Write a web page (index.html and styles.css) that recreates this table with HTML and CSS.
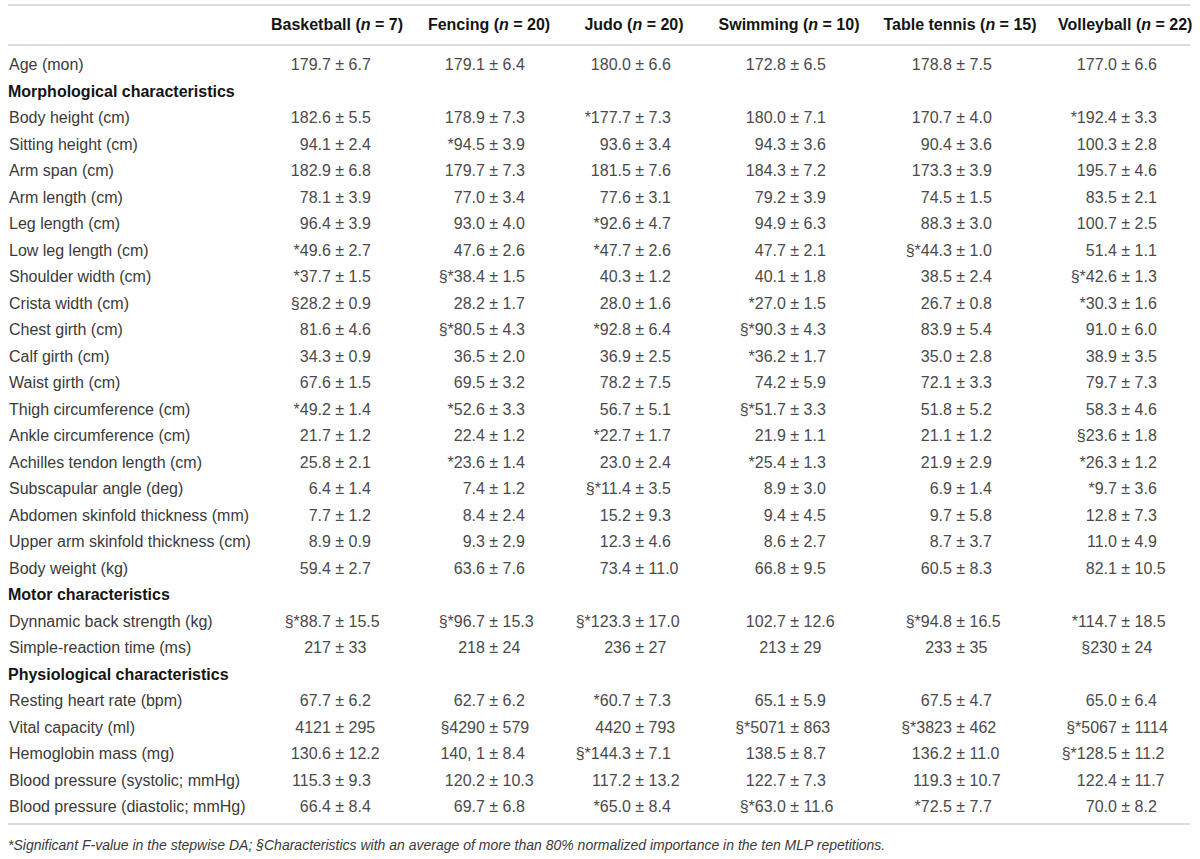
FILE: index.html
```html
<!DOCTYPE html>
<html lang="en">
<head>
<meta charset="utf-8">
<title>Table</title>
<link rel="stylesheet" href="styles.css">
</head>
<body>
<div class="wrap">
<table class="data">
<colgroup>
<col class="c-label"><col class="c-1"><col class="c-2"><col class="c-3"><col class="c-4"><col class="c-5"><col class="c-6">
</colgroup>
<thead>
<tr>
<th class="h-label"></th>
<th>Basketball (<i>n</i> = 7)</th>
<th>Fencing (<i>n</i> = 20)</th>
<th>Judo (<i>n</i> = 20)</th>
<th>Swimming (<i>n</i> = 10)</th>
<th class="h-5">Table tennis (<i>n</i> = 15)</th>
<th class="h-6">Volleyball (<i>n</i> = 22)</th>
</tr>
</thead>
<tbody>
<tr class="r first"><td>Age (mon)</td><td><span class="m">179.7</span> ± 6.7</td><td><span class="m">179.1</span> ± 6.4</td><td><span class="m">180.0</span> ± 6.6</td><td><span class="m">172.8</span> ± 6.5</td><td><span class="m">178.8</span> ± 7.5</td><td><span class="m">177.0</span> ± 6.6</td></tr>
<tr class="sec"><td colspan="7">Morphological characteristics</td></tr>
<tr class="r"><td>Body height (cm)</td><td><span class="m">182.6</span> ± 5.5</td><td><span class="m">178.9</span> ± 7.3</td><td><span class="m">*177.7</span> ± 7.3</td><td><span class="m">180.0</span> ± 7.1</td><td><span class="m">170.7</span> ± 4.0</td><td><span class="m">*192.4</span> ± 3.3</td></tr>
<tr class="r"><td>Sitting height (cm)</td><td><span class="m">94.1</span> ± 2.4</td><td><span class="m">*94.5</span> ± 3.9</td><td><span class="m">93.6</span> ± 3.4</td><td><span class="m">94.3</span> ± 3.6</td><td><span class="m">90.4</span> ± 3.6</td><td><span class="m">100.3</span> ± 2.8</td></tr>
<tr class="r"><td>Arm span (cm)</td><td><span class="m">182.9</span> ± 6.8</td><td><span class="m">179.7</span> ± 7.3</td><td><span class="m">181.5</span> ± 7.6</td><td><span class="m">184.3</span> ± 7.2</td><td><span class="m">173.3</span> ± 3.9</td><td><span class="m">195.7</span> ± 4.6</td></tr>
<tr class="r"><td>Arm length (cm)</td><td><span class="m">78.1</span> ± 3.9</td><td><span class="m">77.0</span> ± 3.4</td><td><span class="m">77.6</span> ± 3.1</td><td><span class="m">79.2</span> ± 3.9</td><td><span class="m">74.5</span> ± 1.5</td><td><span class="m">83.5</span> ± 2.1</td></tr>
<tr class="r"><td>Leg length (cm)</td><td><span class="m">96.4</span> ± 3.9</td><td><span class="m">93.0</span> ± 4.0</td><td><span class="m">*92.6</span> ± 4.7</td><td><span class="m">94.9</span> ± 6.3</td><td><span class="m">88.3</span> ± 3.0</td><td><span class="m">100.7</span> ± 2.5</td></tr>
<tr class="r"><td>Low leg length (cm)</td><td><span class="m">*49.6</span> ± 2.7</td><td><span class="m">47.6</span> ± 2.6</td><td><span class="m">*47.7</span> ± 2.6</td><td><span class="m">47.7</span> ± 2.1</td><td><span class="m">§*44.3</span> ± 1.0</td><td><span class="m">51.4</span> ± 1.1</td></tr>
<tr class="r"><td>Shoulder width (cm)</td><td><span class="m">*37.7</span> ± 1.5</td><td><span class="m">§*38.4</span> ± 1.5</td><td><span class="m">40.3</span> ± 1.2</td><td><span class="m">40.1</span> ± 1.8</td><td><span class="m">38.5</span> ± 2.4</td><td><span class="m">§*42.6</span> ± 1.3</td></tr>
<tr class="r"><td>Crista width (cm)</td><td><span class="m">§28.2</span> ± 0.9</td><td><span class="m">28.2</span> ± 1.7</td><td><span class="m">28.0</span> ± 1.6</td><td><span class="m">*27.0</span> ± 1.5</td><td><span class="m">26.7</span> ± 0.8</td><td><span class="m">*30.3</span> ± 1.6</td></tr>
<tr class="r"><td>Chest girth (cm)</td><td><span class="m">81.6</span> ± 4.6</td><td><span class="m">§*80.5</span> ± 4.3</td><td><span class="m">*92.8</span> ± 6.4</td><td><span class="m">§*90.3</span> ± 4.3</td><td><span class="m">83.9</span> ± 5.4</td><td><span class="m">91.0</span> ± 6.0</td></tr>
<tr class="r"><td>Calf girth (cm)</td><td><span class="m">34.3</span> ± 0.9</td><td><span class="m">36.5</span> ± 2.0</td><td><span class="m">36.9</span> ± 2.5</td><td><span class="m">*36.2</span> ± 1.7</td><td><span class="m">35.0</span> ± 2.8</td><td><span class="m">38.9</span> ± 3.5</td></tr>
<tr class="r"><td>Waist girth (cm)</td><td><span class="m">67.6</span> ± 1.5</td><td><span class="m">69.5</span> ± 3.2</td><td><span class="m">78.2</span> ± 7.5</td><td><span class="m">74.2</span> ± 5.9</td><td><span class="m">72.1</span> ± 3.3</td><td><span class="m">79.7</span> ± 7.3</td></tr>
<tr class="r"><td>Thigh circumference (cm)</td><td><span class="m">*49.2</span> ± 1.4</td><td><span class="m">*52.6</span> ± 3.3</td><td><span class="m">56.7</span> ± 5.1</td><td><span class="m">§*51.7</span> ± 3.3</td><td><span class="m">51.8</span> ± 5.2</td><td><span class="m">58.3</span> ± 4.6</td></tr>
<tr class="r"><td>Ankle circumference (cm)</td><td><span class="m">21.7</span> ± 1.2</td><td><span class="m">22.4</span> ± 1.2</td><td><span class="m">*22.7</span> ± 1.7</td><td><span class="m">21.9</span> ± 1.1</td><td><span class="m">21.1</span> ± 1.2</td><td><span class="m">§23.6</span> ± 1.8</td></tr>
<tr class="r"><td>Achilles tendon length (cm)</td><td><span class="m">25.8</span> ± 2.1</td><td><span class="m">*23.6</span> ± 1.4</td><td><span class="m">23.0</span> ± 2.4</td><td><span class="m">*25.4</span> ± 1.3</td><td><span class="m">21.9</span> ± 2.9</td><td><span class="m">*26.3</span> ± 1.2</td></tr>
<tr class="r"><td>Subscapular angle (deg)</td><td><span class="m">6.4</span> ± 1.4</td><td><span class="m">7.4</span> ± 1.2</td><td><span class="m">§*11.4</span> ± 3.5</td><td><span class="m">8.9</span> ± 3.0</td><td><span class="m">6.9</span> ± 1.4</td><td><span class="m">*9.7</span> ± 3.6</td></tr>
<tr class="r"><td>Abdomen skinfold thickness (mm)</td><td><span class="m">7.7</span> ± 1.2</td><td><span class="m">8.4</span> ± 2.4</td><td><span class="m">15.2</span> ± 9.3</td><td><span class="m">9.4</span> ± 4.5</td><td><span class="m">9.7</span> ± 5.8</td><td><span class="m">12.8</span> ± 7.3</td></tr>
<tr class="r"><td>Upper arm skinfold thickness (cm)</td><td><span class="m">8.9</span> ± 0.9</td><td><span class="m">9.3</span> ± 2.9</td><td><span class="m">12.3</span> ± 4.6</td><td><span class="m">8.6</span> ± 2.7</td><td><span class="m">8.7</span> ± 3.7</td><td><span class="m">11.0</span> ± 4.9</td></tr>
<tr class="r"><td>Body weight (kg)</td><td><span class="m">59.4</span> ± 2.7</td><td><span class="m">63.6</span> ± 7.6</td><td><span class="m">73.4</span> ± 11.0</td><td><span class="m">66.8</span> ± 9.5</td><td><span class="m">60.5</span> ± 8.3</td><td><span class="m">82.1</span> ± 10.5</td></tr>
<tr class="sec"><td colspan="7">Motor characteristics</td></tr>
<tr class="r"><td>Dynnamic back strength (kg)</td><td><span class="m">§*88.7</span> ± 15.5</td><td><span class="m">§*96.7</span> ± 15.3</td><td><span class="m">§*123.3</span> ± 17.0</td><td><span class="m">102.7</span> ± 12.6</td><td><span class="m">§*94.8</span> ± 16.5</td><td><span class="m">*114.7</span> ± 18.5</td></tr>
<tr class="r"><td>Simple-reaction time (ms)</td><td><span class="m">217</span> ± 33</td><td><span class="m">218</span> ± 24</td><td><span class="m">236</span> ± 27</td><td><span class="m">213</span> ± 29</td><td><span class="m">233</span> ± 35</td><td><span class="m">§230</span> ± 24</td></tr>
<tr class="sec"><td colspan="7">Physiological characteristics</td></tr>
<tr class="r"><td>Resting heart rate (bpm)</td><td><span class="m">67.7</span> ± 6.2</td><td><span class="m">62.7</span> ± 6.2</td><td><span class="m">*60.7</span> ± 7.3</td><td><span class="m">65.1</span> ± 5.9</td><td><span class="m">67.5</span> ± 4.7</td><td><span class="m">65.0</span> ± 6.4</td></tr>
<tr class="r"><td>Vital capacity (ml)</td><td><span class="m">4121</span> ± 295</td><td><span class="m">§4290</span> ± 579</td><td><span class="m">4420</span> ± 793</td><td><span class="m">§*5071</span> ± 863</td><td><span class="m">§*3823</span> ± 462</td><td><span class="m">§*5067</span> ± 1114</td></tr>
<tr class="r"><td>Hemoglobin mass (mg)</td><td><span class="m">130.6</span> ± 12.2</td><td><span class="m">140, 1</span> ± 8.4</td><td><span class="m">§*144.3</span> ± 7.1</td><td><span class="m">138.5</span> ± 8.7</td><td><span class="m">136.2</span> ± 11.0</td><td><span class="m">§*128.5</span> ± 11.2</td></tr>
<tr class="r"><td>Blood pressure (systolic; mmHg)</td><td><span class="m">115.3</span> ± 9.3</td><td><span class="m">120.2</span> ± 10.3</td><td><span class="m">117.2</span> ± 13.2</td><td><span class="m">122.7</span> ± 7.3</td><td><span class="m">119.3</span> ± 10.7</td><td><span class="m">122.4</span> ± 11.7</td></tr>
<tr class="r last"><td>Blood pressure (diastolic; mmHg)</td><td><span class="m">66.4</span> ± 8.4</td><td><span class="m">69.7</span> ± 6.8</td><td><span class="m">*65.0</span> ± 8.4</td><td><span class="m">§*63.0</span> ± 11.6</td><td><span class="m">*72.5</span> ± 7.7</td><td><span class="m">70.0</span> ± 8.2</td></tr>
</tbody>
</table>
<p class="note">*Significant F-value in the stepwise DA; §Characteristics with an average of more than 80% normalized importance in the ten MLP repetitions.</p>
</div>
</body>
</html>
```
FILE: styles.css
```css
html, body {
  margin: 0;
  padding: 0;
  background: #ffffff;
}
body {
  font-family: "Liberation Sans", Arial, Helvetica, sans-serif;
  font-size: 16px;
  color: #3a3a3a;
}
.wrap {
  padding: 4px 10px 0 8px;
}
.data {
  border-collapse: separate;
  border-spacing: 0;
  table-layout: fixed;
  width: 1182px;
}
.c-label { width: 253px; }
.c-1 { width: 152px; }
.c-2 { width: 152px; }
.c-3 { width: 138px; }
.c-4 { width: 172px; }
.c-5 { width: 175px; }
.c-6 { width: 140px; }

.data th {
  border-top: 2px solid #dcdcdc;
  border-bottom: 2px solid #dcdcdc;
  padding: 0;
  line-height: 38px;
  font-weight: bold;
  color: #141414;
  text-align: center;
  white-space: nowrap;
}
.data th i { font-style: italic; }
.data th.h-5 { padding-right: 5px; }
.data th.h-6 { padding-left: 8px; }

.data td {
  padding: 0;
  line-height: 26.5px;
  white-space: nowrap;
  vertical-align: middle;
}
.r td {
  color: #4a4a4a;
  text-align: left;
}
.r td:first-child {
  color: #3a3a3a;
  padding-left: 1px;
}
.r td:nth-child(2) { padding-left: 9.9px; }
.r td:nth-child(3) { padding-left: 11.9px; }
.r td:nth-child(4) { padding-left: 5.9px; }
.r td:nth-child(5) { padding-left: 22.9px; }
.r td:nth-child(6) { padding-left: 16.9px; }
.r td:nth-child(7) { padding-left: 6.9px; }

.r.first td { padding-top: 6px; }
.r.last td {
  padding-bottom: 2px;
  border-bottom: 2px solid #dcdcdc;
}

.m {
  display: inline-block;
  width: 60px;
  text-align: right;
}

.sec td {
  font-weight: bold;
  color: #141414;
}

.note {
  margin: 10px 0 0 0;
  font-size: 14px;
  line-height: 20px;
  font-style: italic;
  color: #3a3a3a;
}
```
